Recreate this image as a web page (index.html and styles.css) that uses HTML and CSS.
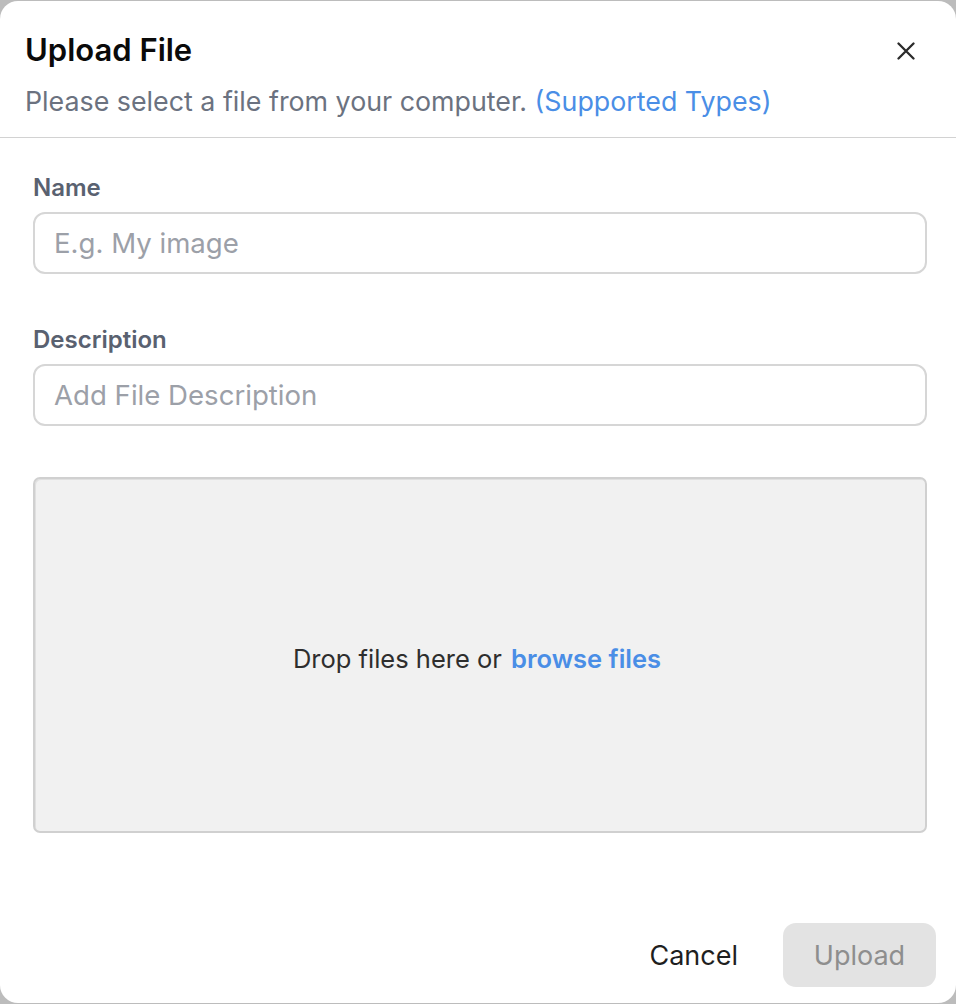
FILE: index.html
```html
<!DOCTYPE html>
<html lang="en">
<head>
<meta charset="utf-8">
<title>Upload File</title>
<link rel="stylesheet" href="styles.css">
</head>
<body>
<div class="dialog">
  <header class="dialog-header">
    <div class="header-text">
      <h1 class="title">Upload File</h1>
      <p class="subtitle">Please select a file from your computer. <a class="link" href="#">(Supported Types)</a></p>
    </div>
    <button class="close" aria-label="Close">
      <svg width="18" height="18" viewBox="0 0 18 18" fill="none" stroke="#2b2b2b" stroke-width="2.3" stroke-linecap="round"><path d="M1.5 1.5 L16.5 16.5 M16.5 1.5 L1.5 16.5"/></svg>
    </button>
  </header>
  <main class="dialog-body">
    <div class="field">
      <label class="label">Name</label>
      <div class="input"><span class="placeholder">E.g. My image</span></div>
    </div>
    <div class="field">
      <label class="label">Description</label>
      <div class="input"><span class="placeholder">Add File Description</span></div>
    </div>
    <div class="dropzone">
      <span class="drop-text">Drop files here or <a class="browse" href="#">browse files</a></span>
    </div>
  </main>
  <footer class="dialog-footer">
    <button class="btn-cancel">Cancel</button>
    <button class="btn-upload">Upload</button>
  </footer>
</div>
</body>
</html>
```
FILE: styles.css
```css
* { box-sizing: border-box; }
html, body { margin: 0; padding: 0; }
body {
  background: #bcbcbc;
  font-family: Inter, "Noto Sans", sans-serif;
  width: 956px;
  height: 1004px;
  overflow: hidden;
}
.dialog {
  margin: 1px 0 0 0;
  width: 956px;
  height: 1002px;
  background: #ffffff;
  border-radius: 18px;
  display: flex;
  flex-direction: column;
}
.dialog-header {
  display: flex;
  justify-content: space-between;
  align-items: flex-start;
  padding: 30px 41px 0 25px;
  height: 137px;
  border-bottom: 1px solid #d2d2d2;
}
.title {
  margin: 0;
  font-size: 31px;
  line-height: 38px;
  font-weight: 600;
  color: #0a0a0a;
}
.subtitle {
  margin: 15px 0 0 0;
  font-size: 26.8px;
  line-height: 34px;
  color: #6b7280;
}
.link { color: #4a8ee6; text-decoration: none; }
.close {
  margin-top: 11px;
  background: none;
  border: 0;
  padding: 0;
  width: 18px;
  height: 18px;
  cursor: pointer;
}
.close svg { display: block; }
.dialog-body {
  padding: 35px 29px 0 33px;
  display: flex;
  flex-direction: column;
}
.field { display: flex; flex-direction: column; margin-bottom: 51px; }
.label {
  font-size: 24px;
  line-height: 30px;
  font-weight: 600;
  color: #596170;
  margin-bottom: 9px;
}
.input {
  height: 62px;
  border: 2px solid #d6d6d6;
  border-radius: 12px;
  display: flex;
  align-items: center;
  padding: 0 19px;
}
.placeholder {
  font-size: 27.6px;
  color: #9ca0a8;
}
.dropzone {
  height: 356px;
  background: #f1f1f1;
  border: 2px solid #d0d0d0;
  border-radius: 7px;
  box-shadow: inset 1px 1px 0 #e0e0e0;
  display: flex;
  align-items: center;
  justify-content: center;
}
.drop-text {
  font-size: 25.5px;
  color: #2e2e2e;
  padding-top: 6px;
  padding-right: 6px;
}
.browse {
  color: #4a8ee6;
  font-weight: 600;
  text-decoration: none;
  margin-left: 2px;
}
.dialog-footer {
  margin-top: auto;
  padding: 0 20px 16px 0;
  display: flex;
  justify-content: flex-end;
  align-items: center;
  gap: 45px;
}
.btn-cancel {
  background: none;
  border: 0;
  padding: 0;
  font-family: inherit;
  font-size: 27px;
  color: #1f1f1f;
}
.btn-upload {
  width: 153px;
  height: 64px;
  border: 0;
  border-radius: 13px;
  background: #e3e3e3;
  font-family: inherit;
  font-size: 27px;
  color: #8e8e8e;
}
```
